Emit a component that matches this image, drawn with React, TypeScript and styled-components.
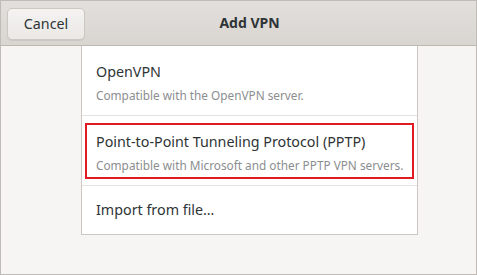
import React from "react";
import styled, { createGlobalStyle } from "styled-components";

const Global = createGlobalStyle`
  html, body { margin: 0; padding: 0; background: #ffffff; }
  body { font-family: "Noto Sans", "DejaVu Sans", sans-serif; }
`;

const Window = styled.div`
  width: 477px;
  height: 275px;
  box-sizing: border-box;
  border: 1px solid #c0bbb6;
  background: #f6f5f4;
  display: flex;
  flex-direction: column;
  overflow: hidden;
`;

const Header = styled.div`
  height: 45px;
  flex: none;
  box-sizing: border-box;
  border-bottom: 1px solid #bfb8b1;
  background: linear-gradient(to bottom, #e2dfdc, #d9d5d1);
  display: grid;
  grid-template-columns: 1fr auto 1fr;
  align-items: center;
  padding: 0 6px;
`;

const CancelButton = styled.button`
  justify-self: start;
  width: 78px;
  height: 32px;
  margin-top: 1px;
  border: 1px solid #cdc7c2;
  border-radius: 5px;
  background: linear-gradient(to bottom, #f4f3f2, #ebe8e5);
  box-shadow: 0 1px 1px rgba(0, 0, 0, 0.07);
  font-family: "Noto Sans", sans-serif;
  font-size: 14.3px;
  color: #2e3436;
  padding: 0;
`;

const Title = styled.div`
  font-weight: bold;
  font-size: 14px;
  color: #2e3436;
  padding-left: 22px;
  margin-top: -1px;
`;

const Body = styled.div`
  flex: 1;
  padding-left: 80px;
`;

const List = styled.div`
  width: 337px;
  box-sizing: border-box;
  background: #ffffff;
  border: 1px solid #cdc7c2;
  border-top: none;
  display: flex;
  flex-direction: column;
`;

const Row = styled.div<{ $h: number; $last?: boolean }>`
  height: ${(p) => p.$h}px;
  box-sizing: border-box;
  border-bottom: ${(p) => (p.$last ? "none" : "1px solid #e4e1de")};
  padding: 0 3px;
  display: flex;
  flex-direction: column;
  justify-content: center;
`;

const Content = styled.div<{ $hl?: boolean; $sub?: boolean }>`
  box-sizing: border-box;
  height: ${(p) => (p.$hl ? "56px" : "auto")};
  border: 2px solid ${(p) => (p.$hl ? "#e01b24" : "transparent")};
  padding: ${(p) => (p.$sub ? "4px 9px 0" : "0 9px")};
  display: flex;
  flex-direction: column;
  justify-content: center;
  gap: 7px;
`;

const RowTitle = styled.div`
  font-size: 14.3px;
  color: #2e3436;
  line-height: 18px;
  white-space: nowrap;
`;

const RowSub = styled.div`
  font-size: 11.8px;
  color: #8b8e8f;
  line-height: 15px;
  white-space: nowrap;
`;

export default function App() {
  return (
    <>
      <Global />
      <Window>
        <Header>
          <CancelButton>Cancel</CancelButton>
          <Title>Add VPN</Title>
          <div />
        </Header>
        <Body>
          <List>
            <Row $h={70}>
              <Content $sub>
                <RowTitle>OpenVPN</RowTitle>
                <RowSub>Compatible with the OpenVPN server.</RowSub>
              </Content>
            </Row>
            <Row $h={70}>
              <Content $hl $sub>
                <RowTitle>Point-to-Point Tunneling Protocol (PPTP)</RowTitle>
                <RowSub>Compatible with Microsoft and other PPTP VPN servers.</RowSub>
              </Content>
            </Row>
            <Row $h={48} $last>
              <Content>
                <RowTitle>Import from file…</RowTitle>
              </Content>
            </Row>
          </List>
        </Body>
      </Window>
    </>
  );
}
